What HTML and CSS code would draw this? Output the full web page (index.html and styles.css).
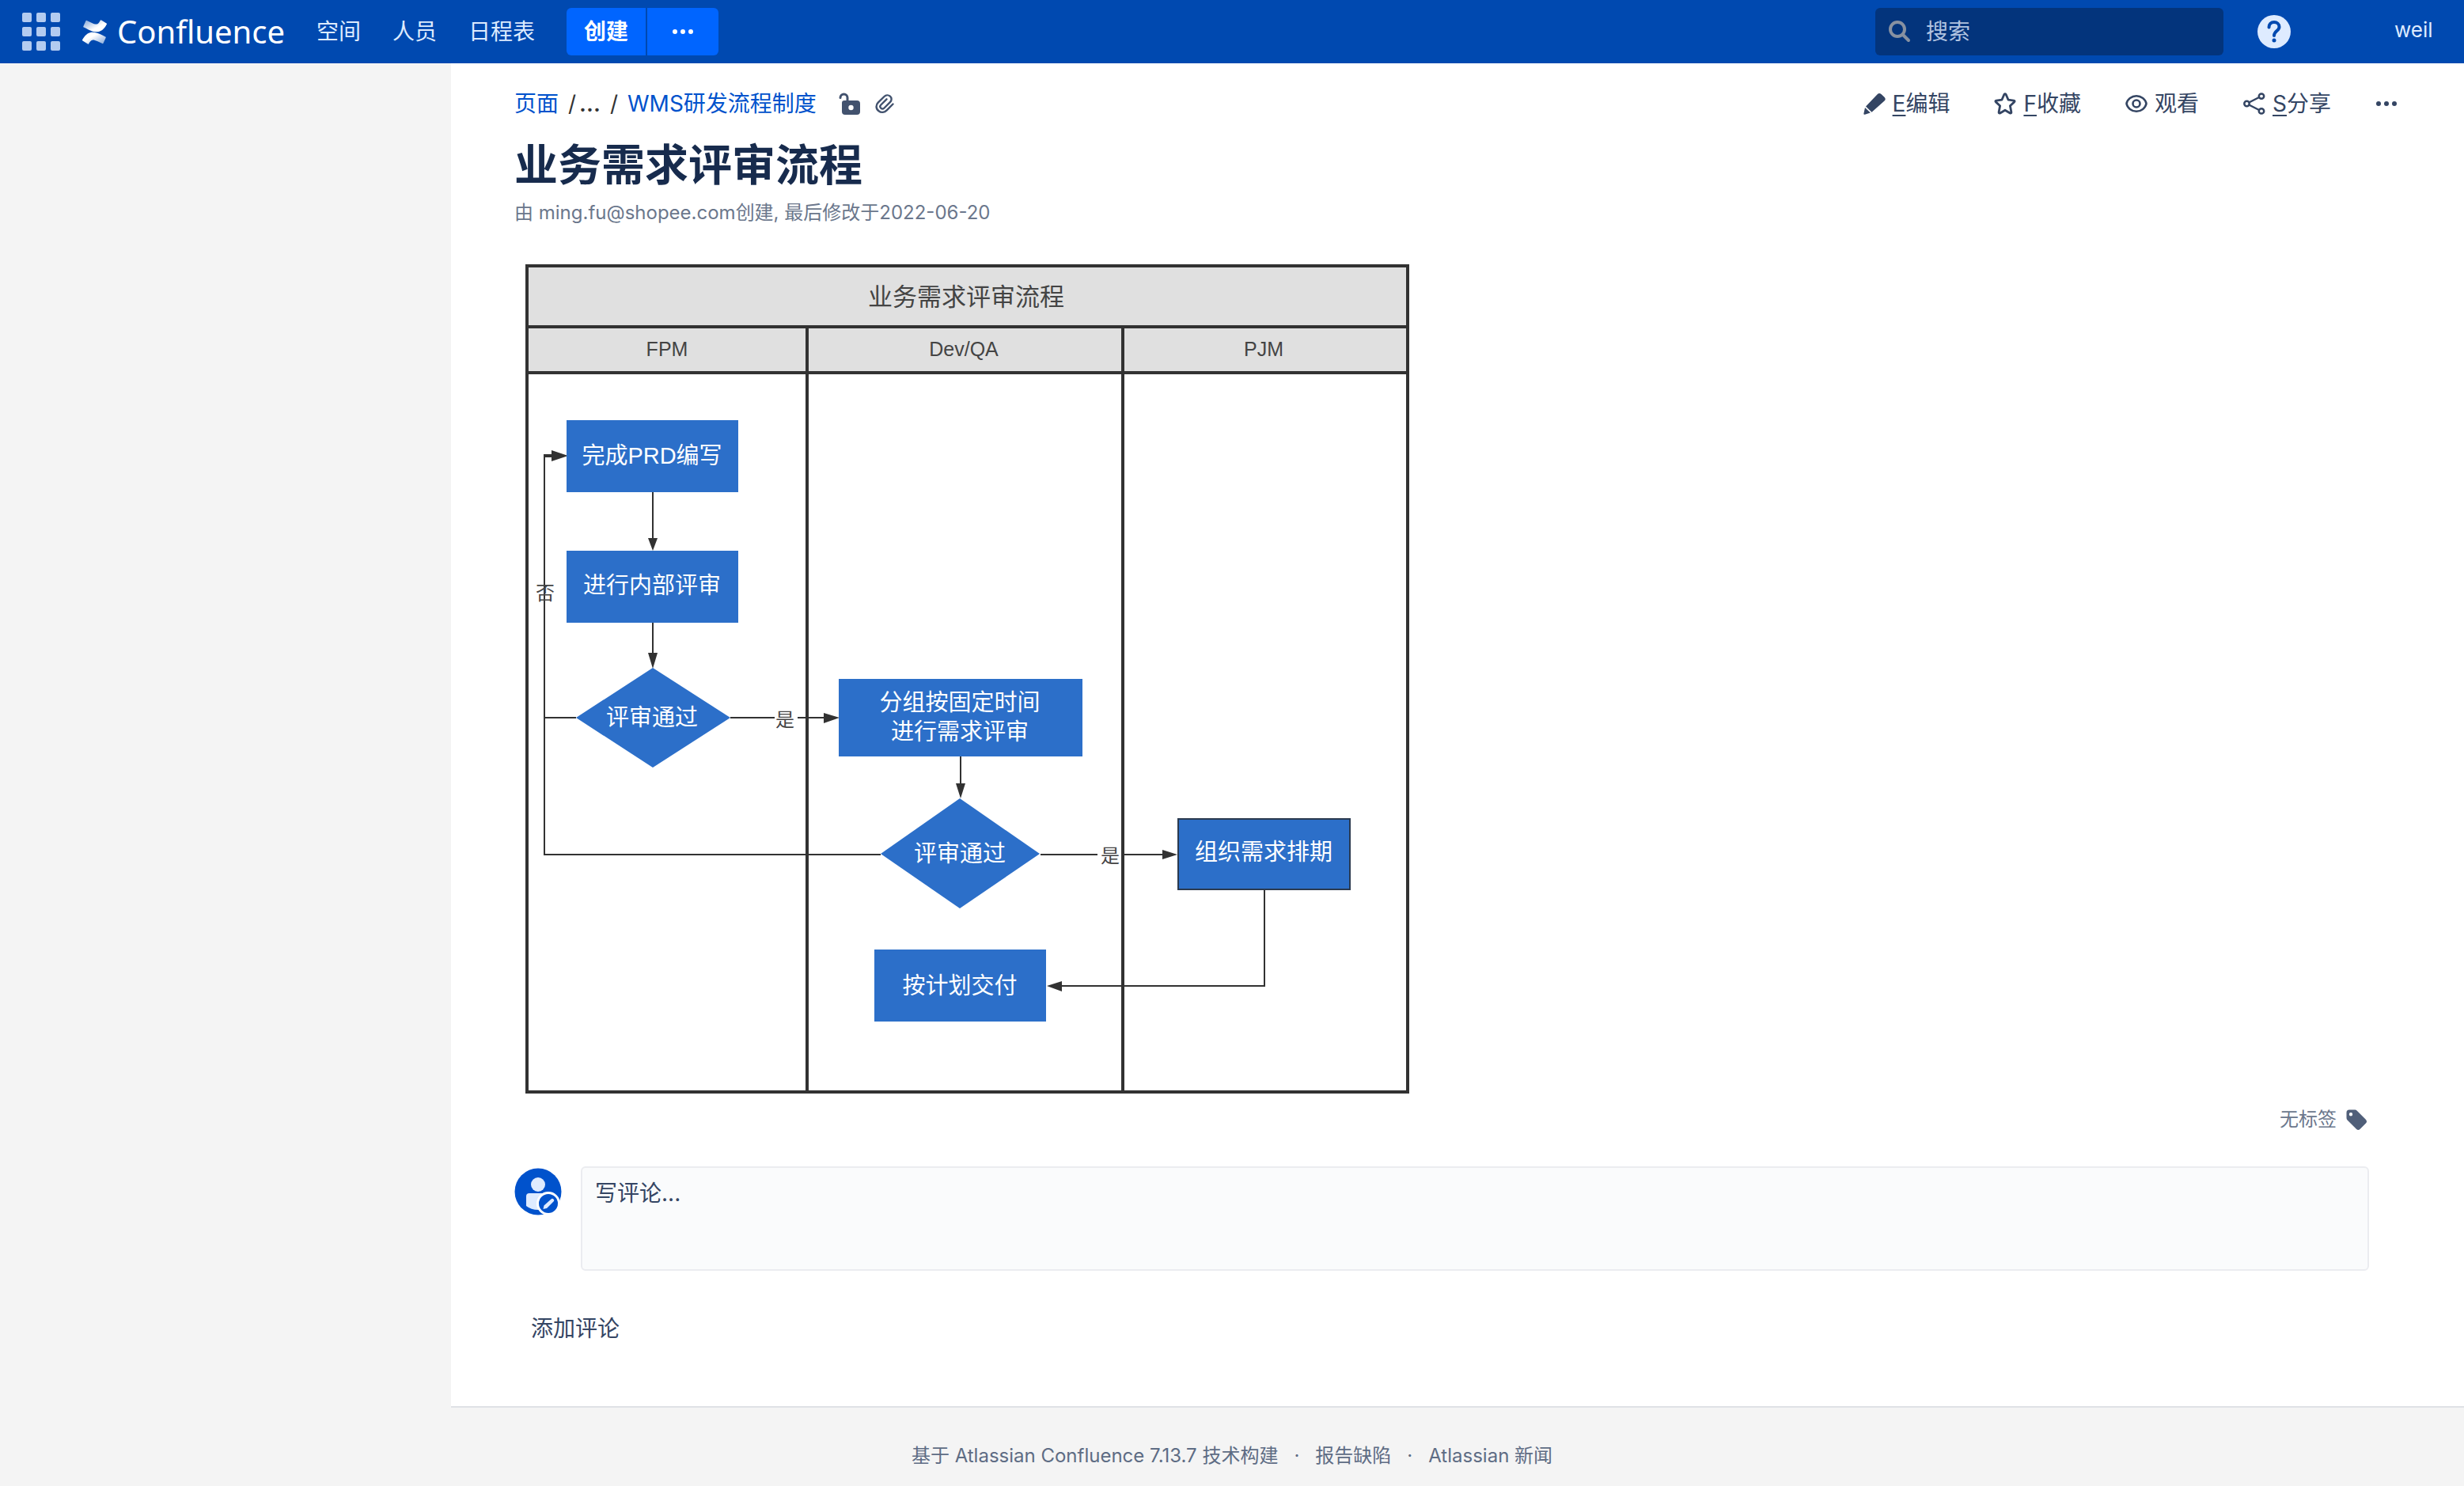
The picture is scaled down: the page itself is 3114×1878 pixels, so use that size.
FILE: index.html
```html
<!DOCTYPE html>
<html lang="zh-CN">
<head>
<meta charset="utf-8">
<title>业务需求评审流程 - Confluence</title>
<link rel="stylesheet" href="styles.css">
</head>
<body>
<header class="topbar">
  <button class="app-switcher" aria-label="应用切换器">
    <svg width="48" height="48" viewBox="0 0 48 48" fill="#b3cbf0">
      <rect width="12" height="12" rx="2"/><rect x="18" width="12" height="12" rx="2"/><rect x="36" width="12" height="12" rx="2"/>
      <rect y="18" width="12" height="12" rx="2"/><rect x="18" y="18" width="12" height="12" rx="2"/><rect x="36" y="18" width="12" height="12" rx="2"/>
      <rect y="36" width="12" height="12" rx="2"/><rect x="18" y="36" width="12" height="12" rx="2"/><rect x="36" y="36" width="12" height="12" rx="2"/>
    </svg>
  </button>
  <a class="logo" href="#">
    <svg width="31" height="31" viewBox="0 0 24 24">
      <defs>
        <linearGradient id="wave-low" x1="1" y1="1" x2="0.2" y2="0.3"><stop offset="0" stop-color="#fff" stop-opacity=".5"/><stop offset=".8" stop-color="#fff"/></linearGradient>
        <linearGradient id="wave-high" x1="0" y1="0" x2="0.8" y2="0.7"><stop offset="0" stop-color="#fff" stop-opacity=".5"/><stop offset=".8" stop-color="#fff"/></linearGradient>
      </defs>
      <path fill="url(#wave-low)" d="M.87 18.257c-.248.382-.53.875-.763 1.245a.764.764 0 0 0 .255 1.04l4.965 3.054a.764.764 0 0 0 1.058-.26c.199-.332.454-.763.733-1.221 1.967-3.247 3.945-2.853 7.508-1.146l4.957 2.337a.764.764 0 0 0 1.028-.382l2.364-5.346a.764.764 0 0 0-.382-1 599.851 599.851 0 0 1-4.965-2.361C10.911 10.97 5.224 11.185.87 18.257z"/>
      <path fill="url(#wave-high)" d="M23.131 5.743c.249-.405.531-.875.764-1.25a.764.764 0 0 0-.256-1.034L18.675.404a.764.764 0 0 0-1.058.26c-.195.335-.451.763-.734 1.225-1.966 3.246-3.945 2.85-7.508 1.146L4.437.694a.764.764 0 0 0-1.027.382L1.046 6.422a.764.764 0 0 0 .382 1c1.039.49 3.105 1.467 4.965 2.361 6.698 3.246 12.392 3.029 16.738-4.04z"/>
    </svg>
    <span>Confluence</span>
  </a>
  <nav class="nav">
    <a href="#">空间</a>
    <a href="#">人员</a>
    <a href="#">日程表</a>
  </nav>
  <div class="create">
    <button class="create-main">创建</button>
    <button class="create-more" aria-label="从模板创建">
      <svg width="26" height="6" viewBox="0 0 26 6" fill="#fff"><circle cx="3" cy="3" r="3"/><circle cx="13" cy="3" r="3"/><circle cx="23" cy="3" r="3"/></svg>
    </button>
  </div>
  <form class="search">
    <svg width="30" height="30" viewBox="0 0 30 30" fill="none" stroke="#8791a1" stroke-width="4" stroke-linecap="round"><circle cx="12" cy="12" r="9"/><path d="M19 19l7 7"/></svg>
    <input type="search" aria-label="搜索" placeholder="搜索">
  </form>
  <button class="help" aria-label="帮助">
    <svg width="42" height="42" viewBox="0 0 42 42"><circle cx="21" cy="21" r="21" fill="#deebff"/><path d="M14.500 15.500c0-4 2.800-6.500 6.500-6.500s6.500 2.500 6.500 6c0 5-6.500 5.300-6.500 11" fill="none" stroke="#0049b0" stroke-width="4" stroke-linecap="round"/><circle cx="21" cy="32" r="2.500" fill="#0049b0"/></svg>
  </button>
  <a class="profile" href="#">weil</a>
</header>

<div class="columns">
  <aside class="sidebar" aria-label="侧边栏"></aside>
  <main class="page">
    <div class="page-top">
      <nav class="crumbs" aria-label="路径">
        <a href="#">页面</a>
        <span class="slash">/</span><button class="crumb-more">...</button>
        <span class="slash">/</span>
        <a href="#">WMS研发流程制度</a>
        <a class="crumb-lock" href="#" aria-label="无限制">
          <svg width="28" height="28" viewBox="0 0 28 28"><path d="M2 6.500C2 4 4 2 6.500 2S11 4 11 6.500V12" fill="none" stroke="#42526e" stroke-width="3" stroke-linecap="round"/><path fill="#42526e" fill-rule="evenodd" d="M7 10h16a4 4 0 0 1 4 4v10a4 4 0 0 1-4 4H8a4 4 0 0 1-4-4V13a3 3 0 0 1 3-3zm8.500 5.800a3.200 3.200 0 1 0 0 6.400 3.200 3.200 0 0 0 0-6.400z"/></svg>
        </a>
        <a class="crumb-clip" href="#" aria-label="附件">
          <svg width="24" height="24" viewBox="0 0 24 24" fill="none" stroke="#42526e" stroke-width="2.400" stroke-linecap="round" stroke-linejoin="round"><path d="M22.500 12.500l-7.800 7.800c-2.800 2.800-7 3.400-10.200.9-4-3-3.600-7.700-.8-10.500L11.500 3c2-2 5.300-2.200 7.400-.3 2.300 2 2.200 5.200.2 7.200l-7.600 7.600c-1.200 1.200-3 1.300-4.200.2-1.200-1.200-1.200-3 0-4.200l7.200-7.200"/></svg>
        </a>
      </nav>
      <div class="actions">
        <button class="action">
          <svg width="28" height="28" viewBox="0 0 28 28" fill="#344563"><path d="M17.600 2.200a3.500 3.500 0 0 1 4.900-.2l4 3.800a3.300 3.300 0 0 1 0 4.700L10.500 24.800 3 17.400z"/><path d="M2 19l6.800 6.600-7 2.200a1.100 1.100 0 0 1-1.400-1.400z"/></svg>
          <span><u>E</u>编辑</span>
        </button>
        <button class="action">
          <svg width="28" height="28" viewBox="0 0 28 28" fill="none" stroke="#344563" stroke-width="2.800" stroke-linejoin="round"><path d="M12.900 2.300q1.100-1.500 2.200 0l3 6.900 6.900.9q1.800.4.600 1.800l-5.200 4.800 1.500 8q0 2-1.600 1.300L14 22.200 7.700 26q-1.600.7-1.600-1.300l1.500-8L2.400 11.900q-1.200-1.400.6-1.800l6.900-.9z"/></svg>
          <span><u>F</u>收藏</span>
        </button>
        <button class="action">
          <svg width="28" height="28" viewBox="0 0 28 28" fill="none" stroke="#344563" stroke-width="2.600"><path d="M1.500 14C2.500 8.500 8 4.300 14 4.300S25.500 8.500 26.500 14C25.500 19.500 20 23.700 14 23.700S2.500 19.500 1.500 14z"/><circle cx="14" cy="14" r="4.500"/></svg>
          <span>观看</span>
        </button>
        <button class="action">
          <svg width="28" height="28" viewBox="0 0 28 28" fill="none" stroke="#344563" stroke-width="2.500"><circle cx="4.500" cy="14" r="3.200"/><circle cx="23" cy="4.600" r="3.200"/><circle cx="23" cy="23.400" r="3.200"/><path d="M7.300 12.500L20 6M7.300 15.500L20 22"/></svg>
          <span><u>S</u>分享</span>
        </button>
        <button class="action" aria-label="更多操作">
          <svg width="28" height="28" viewBox="0 0 28 28" fill="#344563"><circle cx="4" cy="14" r="3"/><circle cx="14" cy="14" r="3"/><circle cx="24" cy="14" r="3"/></svg>
        </button>
      </div>
    </div>

    <h1 class="title">业务需求评审流程</h1>
    <p class="meta">由 <a href="#">ming.fu@shopee.com</a>创建, 最后修改于<a href="#">2022-06-20</a></p>

    <svg class="diagram" viewBox="0 0 1117 1048" role="img" aria-label="业务需求评审流程图">
      <g transform="translate(-664 -334)">
        <rect x="666" y="336" width="1113" height="135" fill="#e0e0e0"/>
        <g class="frame">
          <rect x="666" y="336" width="1113" height="1044"/>
          <path d="M666 413H1779M666 471H1779M1020 413V1380M1419 413V1380"/>
        </g>
        <g class="lines">
          <path d="M825 622V684M825 787V830M1214 956V994"/>
          <path d="M728 907H688M1113 1080H688V576H700"/>
          <path d="M923 907H979M1008 907H1044"/>
          <path d="M1315 1080H1387M1419 1080H1472"/>
          <path d="M1598 1125V1246H1338"/>
        </g>
        <path d="M687 576H698" stroke="#323232" stroke-width="4"/>
        <g fill="#323232">
          <path d="M697 569L718 576 697 583zM819 680H831L825 696zM819 825H831L825 845zM1208 990H1220L1214 1009z"/>
          <path d="M1041 901L1061 907 1041 914zM1469 1074L1488 1080 1469 1086zM1342 1240L1323 1246 1342 1253z"/>
        </g>
        <g fill="#2c6fc9">
          <rect x="716" y="531" width="217" height="91"/>
          <rect x="716" y="696" width="217" height="91"/>
          <path d="M825 844L923 907 825 970 728 907z"/>
          <rect x="1060" y="858" width="308" height="98"/>
          <path d="M1213 1009L1314 1079 1213 1148 1113 1079z"/>
          <rect x="1105" y="1200" width="217" height="91"/>
          <rect x="1489" y="1035" width="217" height="89" stroke="#2b3a4f" stroke-width="2"/>
        </g>
        <g class="lane-title"><text x="1221" y="386">业务需求评审流程</text></g>
        <g class="lane-name">
          <text x="843" y="450">FPM</text><text x="1218" y="450">Dev/QA</text><text x="1597" y="450">PJM</text>
        </g>
        <g class="step">
          <text x="824" y="586">完成PRD编写</text>
          <text x="824" y="750">进行内部评审</text>
          <text x="824" y="917">评审通过</text>
          <text x="1213" y="898">分组按固定时间</text>
          <text x="1213" y="935">进行需求评审</text>
          <text x="1213" y="1089">评审通过</text>
          <text x="1213" y="1256">按计划交付</text>
          <text x="1597" y="1087">组织需求排期</text>
        </g>
        <g class="branch">
          <text x="689" y="758">否</text><text x="992" y="918">是</text><text x="1403" y="1090">是</text>
        </g>
      </g>
    </svg>

    <div class="labels">
      <span>无标签</span>
      <button aria-label="编辑标签">
        <svg width="26" height="26" viewBox="0 0 26 26"><path fill="#505f79" fill-rule="evenodd" d="M4 .5h6.500c1.500 0 2.500.4 3.500 1.400l10.800 10.800a3.600 3.600 0 0 1 0 5l-7 7a3.600 3.600 0 0 1-5 0L2 14C1 13 .5 12 .5 10.500V4A3.500 3.500 0 0 1 4 .500zM6 4a2.200 2.200 0 1 0 0 4.400A2.200 2.200 0 0 0 6 4z"/></svg>
      </button>
    </div>

    <form class="comment">
      <svg width="60" height="60" viewBox="0 0 60 60">
        <circle cx="30" cy="30" r="29.500" fill="#0052cc"/>
        <circle cx="30" cy="21" r="9" fill="#deebff"/>
        <path d="M15 36q0-4 4-4h22q4 0 4 4v12q-6 5-15 5t-15-5z" fill="#deebff"/>
        <circle cx="43" cy="45" r="13.500" fill="#0052cc" stroke="#fff" stroke-width="3"/>
        <path d="M46.500 39.500q1.500-1.500 3 0t0 3L41 51l-4.500 1 1-4.500z" fill="#deebff"/>
      </svg>
      <textarea aria-label="写评论" placeholder="写评论..."></textarea>
    </form>
    <button class="add-comment">添加评论</button>
  </main>
</div>

<footer class="footer">
  <span>基于 <a href="#">Atlassian Confluence 7.13.7</a> 技术构建</span>
  <span>·</span>
  <a href="#">报告缺陷</a>
  <span>·</span>
  <a href="#">Atlassian 新闻</a>
</footer>
</body>
</html>
```

FILE: styles.css
```css
* {
  box-sizing: border-box;
}

body {
  margin: 0;
  min-height: 100vh;
  display: flex;
  flex-direction: column;
  background: #f4f4f4;
  color: #344563;
  font: 28px/40px Inter, "Noto Sans CJK SC", sans-serif;
}

a {
  color: inherit;
  text-decoration: none;
}

button,
input,
textarea {
  margin: 0;
  padding: 0;
  border: 0;
  background: none;
  color: inherit;
  font: inherit;
}

svg {
  display: block;
  flex: none;
}

/* Top bar */
.topbar {
  display: flex;
  align-items: center;
  height: 80px;
  padding: 0 40px 0 28px;
  background: #0049b0;
  color: #deebff;
}

.logo {
  display: flex;
  align-items: center;
  gap: 13px;
  margin-left: 28px;
  color: #fff;
  font: 40px/56px "Noto Sans", sans-serif;
}

.nav {
  display: flex;
  gap: 40px;
  margin-left: 40px;
}

.create {
  display: flex;
  gap: 2px;
  height: 60px;
  margin-left: 40px;
}

.create button {
  display: flex;
  align-items: center;
  justify-content: center;
  background: #0065ff;
  color: #fff;
}

.create .create-main {
  width: 100px;
  border-radius: 6px 0 0 6px;
  font-weight: 700;
}

.create .create-more {
  width: 90px;
  border-radius: 0 6px 6px 0;
}

.search {
  display: flex;
  align-items: center;
  gap: 18px;
  width: 440px;
  height: 60px;
  margin-left: auto;
  padding: 0 16px;
  border-radius: 6px;
  background: #03347c;
}

.search input {
  flex: 1;
  min-width: 0;
}

.search input::placeholder {
  color: #b1c3e0;
  opacity: 1;
}

.help {
  margin-left: 43px;
}

.profile {
  width: 48px;
  margin-left: 131px;
  padding-bottom: 4px;
  font-size: 26px;
  white-space: nowrap;
}

/* Columns */
.columns {
  display: flex;
}

.sidebar {
  flex: none;
  width: 570px;
}

.page {
  flex: 1;
  padding: 30px 120px 78px 80px;
  border-bottom: 2px solid #dfe1e6;
  background: #fff;
}

.page-top {
  display: flex;
  align-items: center;
  justify-content: space-between;
  height: 42px;
  margin-right: -36px;
}

.crumbs {
  display: flex;
  align-items: center;
  color: #0052cc;
}

.slash {
  margin-left: 12px;
  color: #333;
}

.slash + a {
  margin-left: 12px;
}

.crumb-more {
  margin-left: 4px;
  color: #333;
  font-weight: 600;
}

.crumb-lock {
  margin-left: 28px;
}

.crumb-clip {
  margin-left: 18px;
}

.actions {
  display: flex;
  gap: 56px;
}

.action {
  display: flex;
  align-items: center;
  gap: 9px;
}

.action u {
  text-decoration-thickness: 2px;
  text-underline-offset: 4px;
}

.title {
  margin: 24px 0 0;
  color: #172b4d;
  font-size: 55px;
  line-height: 64px;
}

.meta {
  margin: 13px 0 0;
  color: #6b778c;
  font-size: 24px;
  line-height: 32px;
}

/* Swimlane diagram */
.diagram {
  width: 1117px;
  max-width: 100%;
  margin: 49px 0 0 14px;
  font-family: "Liberation Sans", "Noto Sans CJK SC", sans-serif;
}

.diagram text {
  text-anchor: middle;
}

.frame {
  fill: none;
  stroke: #323232;
  stroke-width: 4px;
}

.lines {
  fill: none;
  stroke: #323232;
  stroke-width: 2px;
}

.lane-title {
  fill: #444;
  font-size: 31px;
}

.lane-name {
  fill: #444;
  font-size: 25px;
}

.step {
  fill: #fff;
  font-size: 29px;
}

.branch {
  fill: #444;
  font-size: 24px;
}

/* Labels and comments */
.labels {
  display: flex;
  align-items: center;
  justify-content: flex-end;
  gap: 12px;
  margin-top: 17px;
  padding-right: 3px;
  color: #6b778c;
  font-size: 24px;
  line-height: 32px;
}

.comment {
  display: flex;
  align-items: flex-start;
  gap: 24px;
  margin-top: 43px;
}

.comment svg {
  margin-top: 2px;
}

.comment textarea {
  flex: 1;
  height: 132px;
  padding: 12px 16px;
  border: 2px solid #ebecf0;
  border-radius: 6px;
  background: #fafbfc;
  resize: none;
}

.comment textarea::placeholder {
  color: #344563;
  opacity: 1;
}

.add-comment {
  display: block;
  margin: 53px 0 0 21px;
}

.footer {
  display: flex;
  justify-content: center;
  gap: 20px;
  padding: 45px 0 22px;
  color: #5e6c84;
  font-size: 24px;
  line-height: 32px;
}
```
